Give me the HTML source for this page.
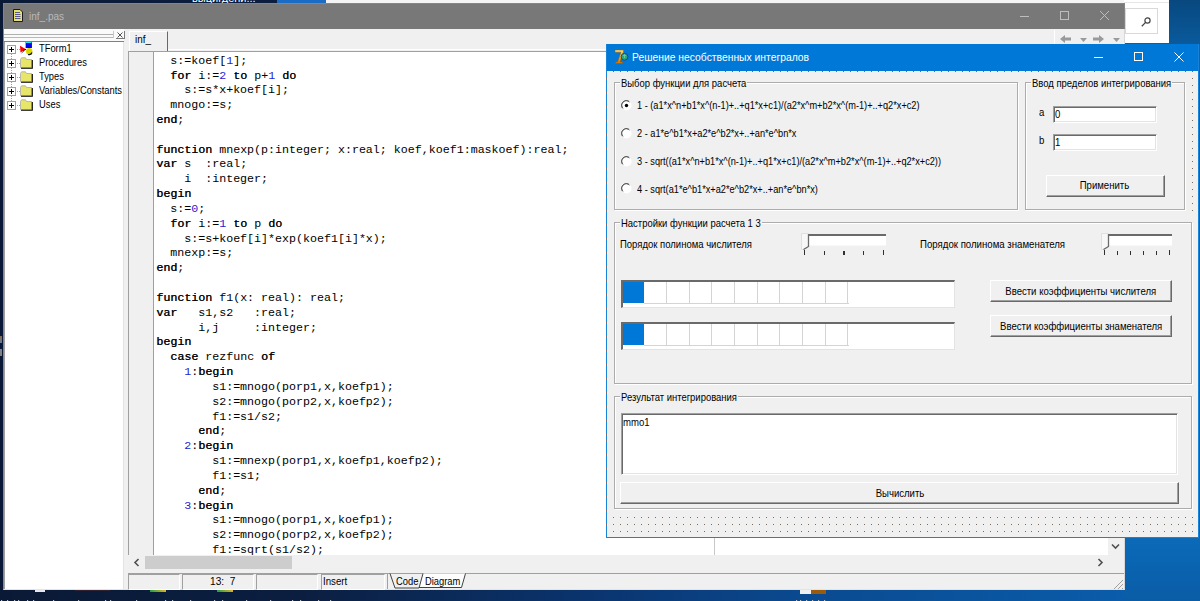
<!DOCTYPE html>
<html><head><meta charset="utf-8"><style>
*{box-sizing:border-box;margin:0;padding:0}
html,body{width:1200px;height:601px;overflow:hidden}
body{position:relative;background:linear-gradient(to right,#0a1a36 0%,#0b1e40 25%,#0b2650 33%,#0a3570 50%,#0a4a90 67%,#0a55a0 83%,#0b60b0 100%);font-family:"Liberation Sans",sans-serif;}
.a{position:absolute}
.t{position:absolute;white-space:nowrap;font-size:11px;line-height:13px;color:#000;transform-origin:0 0}
.code{position:absolute;left:156.3px;top:53.7px;font-family:"Liberation Mono",monospace;font-size:11.65px;line-height:14.83px;white-space:pre;color:#000}
.code b{font-weight:normal;text-shadow:0.4px 0 0 rgba(0,0,0,0.8)}
.code i{font-style:normal;color:#2424d4}
.grid{background-image:radial-gradient(circle at 0.5px 0.5px,#7d6e60 0.7px,transparent 0.8px);}
</style></head>
<body>
<div class="a" style="left:277px;top:0;width:49px;height:3px;background:#1a6cc4"></div>
<div class="a" style="left:326px;top:0;width:843px;height:3px;background:#f4f4f4"></div>
<div class="t" style="left:192px;top:-8px;color:#fff;font-size:11px">выцигдени...</div>
<div class="a" style="left:1124px;top:538px;width:76px;height:63px;background:linear-gradient(#0b6ab8,#0a5ca6)"></div>
<div class="a" style="left:1169px;top:0;width:31px;height:44px;background:linear-gradient(#08487f,#0a5a9c)"></div>
<div class="a" style="left:1124px;top:0;width:45px;height:43px;background:#fff"></div>
<div class="a" style="left:1124px;top:2px;width:45px;height:1px;background:#e6e6e6"></div>
<div class="a" style="left:1125px;top:8px;width:33px;height:26px;border:1px solid #d9d9d9;background:#fff"></div>
<svg class="a" style="left:1140px;top:16px" width="12" height="12" viewBox="0 0 12 12"><circle cx="7.5" cy="4.5" r="2.6" fill="none" stroke="#444" stroke-width="1.2"/><line x1="5.6" y1="6.4" x2="1.8" y2="10.2" stroke="#444" stroke-width="1.3"/></svg>
<svg class="a" style="left:0;top:598px" width="1200" height="3"><path d="M1 2.5h1.2M7 2.5h1.2M14 2.5h1.2M18 2.5h1.2M27 2.5h1.2M33 2.5h1.2M53 2.5h1.2M78 2.5h1.2M105 2.5h1.2M110 2.5h1.2M136 2.5h1.2M165 2.5h1.2M172 2.5h1.2M190 2.5h1.2M214 2.5h1.2M222 2.5h1.2M246 2.5h1.2M270 2.5h1.2M292 2.5h1.2M300 2.5h1.2M318 2.5h1.2M330 2.5h1.2M796 2.5h1.2M800 2.5h1.2M806 2.5h1.2M812 2.5h1.2M818 2.5h1.2M824 2.5h1.2" stroke="#b8c0cc" stroke-width="1"/></svg>
<div class="a" style="left:800px;top:590px;width:11px;height:4px;background:#f0f0f0"></div>
<div class="a" style="left:811px;top:590px;width:15px;height:4px;background:#9a5a10"></div>
<div class="a" style="left:35px;top:590px;width:10px;height:2px;background:#e8e8f0"></div>
<div class="a" style="left:150px;top:590px;width:16px;height:2px;background:linear-gradient(to right,#20a040,#e0b020)"></div>
<div class="a" style="left:217px;top:590px;width:16px;height:2px;background:linear-gradient(to right,#20a040,#e0b020)"></div>
<div class="a" style="left:75px;top:590px;width:35px;height:1px;background:#302030"></div>
<div class="a" style="left:0;top:336px;width:2px;height:7px;opacity:.6;background:linear-gradient(#e0a050,#a0c0f0)"></div>
<div class="a" style="left:0;top:349px;width:2px;height:7px;opacity:.6;background:linear-gradient(#c0d0f0,#e0c080)"></div>
<div class="a" style="left:3px;top:3px;width:1122px;height:587px;background:#f0f0f0;border:1px solid #8a8a8a;border-bottom-color:#e4e4e4;border-right-color:#d8d8d8"></div>
<div class="a" style="left:3px;top:3px;width:1122px;height:26px;background:#787878;border:1px solid #858585;border-bottom:none"></div>
<svg class="a" style="left:12px;top:8px" width="12" height="15" viewBox="0 0 12 15"><path d="M1.5 1.5h6.5l2.5 2.5v9.5h-9z" fill="#e8e070" stroke="#1a1a1a" stroke-width="1"/><path d="M3 4.5h5M3 6.5h5.5M3 8.5h5.5M3 10.5h5.5" stroke="#5a5a8a" stroke-width="1"/></svg>
<div class="t" style="left:29px;top:10px;color:#b8b8b8;font-size:11px;transform:scaleX(0.91)">inf_.pas</div>
<div class="a" style="left:1020px;top:16px;width:9px;height:1px;background:#bdbdbd"></div>
<div class="a" style="left:1060px;top:11px;width:9px;height:9px;border:1px solid #bdbdbd"></div>
<svg class="a" style="left:1099px;top:10px" width="11" height="11" viewBox="0 0 11 11"><path d="M1 1L10 10M10 1L1 10" stroke="#bdbdbd" stroke-width="1"/></svg>
<div class="a" style="left:4px;top:29px;width:120px;height:12px;background:#fafafa"></div>
<div class="a" style="left:4px;top:34px;width:110px;height:1px;background:#b0b0b0"></div>
<div class="a" style="left:4px;top:37px;width:110px;height:1px;background:#b8b8b8"></div>
<div class="a" style="left:113px;top:31px;width:1px;height:7px;background:#c8c8c8"></div>
<div class="a" style="left:116px;top:31px;width:9px;height:8px;border-right:1px solid #7a7a7a;border-bottom:1px solid #7a7a7a"></div>
<svg class="a" style="left:117px;top:32px" width="6" height="6" viewBox="0 0 6 6"><path d="M0.5 0.5L5.5 5.5M5.5 0.5L0.5 5.5" stroke="#404040" stroke-width="0.9"/></svg>
<div class="a" style="left:4px;top:40.5px;width:120px;height:1.5px;background:#808080"></div>
<div class="a" style="left:4px;top:42px;width:120px;height:547px;background:#fff;border-left:1px solid #a0a0a0"></div>
<div class="a" style="left:123px;top:42px;width:1px;height:547px;background:#e3e3e3"></div>
<div class="a" style="left:11px;top:54px;width:1px;height:48px;background-image:linear-gradient(#a0a0a0 50%,transparent 50%);background-size:1px 2px"></div>
<div class="a" style="left:7px;top:45px;width:9px;height:9px;border:1px solid #a0a0a0;background:#fff"></div>
<div class="a" style="left:9px;top:49px;width:5px;height:1px;background:#000"></div>
<div class="a" style="left:11px;top:47px;width:1px;height:5px;background:#000"></div>
<div class="a" style="left:17px;top:49px;width:3px;height:1px;background-image:linear-gradient(to right,#a0a0a0 50%,transparent 50%);background-size:2px 1px"></div>
<svg class="a" style="left:20px;top:42px" width="14" height="14" viewBox="0 0 14 14"><rect x="5.5" y="0" width="6" height="6" fill="#0000f0"/><path d="M5.5 6V0.5H11.5" fill="none" stroke="#20e8f0" stroke-width="1"/><path d="M11.5 0.5V6" stroke="#101010" stroke-width="0.8"/><path d="M0 3.8L6 7.3L0.5 10.5z" fill="#ff0000"/><path d="M3 8.8L6 7.3" stroke="#400000" stroke-width="1"/><path d="M1.5 11L4 9" stroke="#507070" stroke-width="1"/><circle cx="9.2" cy="9.2" r="3.2" fill="#d8d800"/><path d="M12 10.5A3.2 3.2 0 0 1 8 12.5" fill="none" stroke="#101010" stroke-width="1.2"/></svg>
<div class="t" style="left:39px;top:42px;transform:scaleX(0.85)">TForm1</div>
<div class="a" style="left:7px;top:59px;width:9px;height:9px;border:1px solid #a0a0a0;background:#fff"></div>
<div class="a" style="left:9px;top:63px;width:5px;height:1px;background:#000"></div>
<div class="a" style="left:11px;top:61px;width:1px;height:5px;background:#000"></div>
<div class="a" style="left:17px;top:63px;width:3px;height:1px;background-image:linear-gradient(to right,#a0a0a0 50%,transparent 50%);background-size:2px 1px"></div>
<svg class="a" style="left:20px;top:57px" width="14" height="13" viewBox="0 0 14 13"><path d="M0.5 2.5L1.5 0.8H5.5L6.5 2.5H11.5V10.5H0.5z" fill="#e8e66a" stroke="#a8a8a8" stroke-width="0.8"/><path d="M1 11.3H12.3V3" fill="none" stroke="#000" stroke-width="1.1"/></svg>
<div class="t" style="left:39px;top:56px;transform:scaleX(0.85)">Procedures</div>
<div class="a" style="left:7px;top:73px;width:9px;height:9px;border:1px solid #a0a0a0;background:#fff"></div>
<div class="a" style="left:9px;top:77px;width:5px;height:1px;background:#000"></div>
<div class="a" style="left:11px;top:75px;width:1px;height:5px;background:#000"></div>
<div class="a" style="left:17px;top:77px;width:3px;height:1px;background-image:linear-gradient(to right,#a0a0a0 50%,transparent 50%);background-size:2px 1px"></div>
<svg class="a" style="left:20px;top:71px" width="14" height="13" viewBox="0 0 14 13"><path d="M0.5 2.5L1.5 0.8H5.5L6.5 2.5H11.5V10.5H0.5z" fill="#e8e66a" stroke="#a8a8a8" stroke-width="0.8"/><path d="M1 11.3H12.3V3" fill="none" stroke="#000" stroke-width="1.1"/></svg>
<div class="t" style="left:39px;top:70px;transform:scaleX(0.85)">Types</div>
<div class="a" style="left:7px;top:87px;width:9px;height:9px;border:1px solid #a0a0a0;background:#fff"></div>
<div class="a" style="left:9px;top:91px;width:5px;height:1px;background:#000"></div>
<div class="a" style="left:11px;top:89px;width:1px;height:5px;background:#000"></div>
<div class="a" style="left:17px;top:91px;width:3px;height:1px;background-image:linear-gradient(to right,#a0a0a0 50%,transparent 50%);background-size:2px 1px"></div>
<svg class="a" style="left:20px;top:85px" width="14" height="13" viewBox="0 0 14 13"><path d="M0.5 2.5L1.5 0.8H5.5L6.5 2.5H11.5V10.5H0.5z" fill="#e8e66a" stroke="#a8a8a8" stroke-width="0.8"/><path d="M1 11.3H12.3V3" fill="none" stroke="#000" stroke-width="1.1"/></svg>
<div class="t" style="left:39px;top:84px;transform:scaleX(0.85)">Variables/Constants</div>
<div class="a" style="left:7px;top:101px;width:9px;height:9px;border:1px solid #a0a0a0;background:#fff"></div>
<div class="a" style="left:9px;top:105px;width:5px;height:1px;background:#000"></div>
<div class="a" style="left:11px;top:103px;width:1px;height:5px;background:#000"></div>
<div class="a" style="left:17px;top:105px;width:3px;height:1px;background-image:linear-gradient(to right,#a0a0a0 50%,transparent 50%);background-size:2px 1px"></div>
<svg class="a" style="left:20px;top:99px" width="14" height="13" viewBox="0 0 14 13"><path d="M0.5 2.5L1.5 0.8H5.5L6.5 2.5H11.5V10.5H0.5z" fill="#e8e66a" stroke="#a8a8a8" stroke-width="0.8"/><path d="M1 11.3H12.3V3" fill="none" stroke="#000" stroke-width="1.1"/></svg>
<div class="t" style="left:39px;top:98px;transform:scaleX(0.85)">Uses</div>
<div class="a" style="left:128px;top:29px;width:996px;height:22px;background:#f0f0f0"></div>
<div class="a" style="left:129px;top:31px;width:39px;height:20px;background:#f0f0f0;border-left:1px solid #fff;border-top:1px solid #fff;border-right:1px solid #696969"></div>
<div class="t" style="left:135px;top:33px;transform:scaleX(0.9)">inf_</div>
<div class="a" style="left:168px;top:49px;width:956px;height:1px;background:#fff"></div>
<div class="a" style="left:1054px;top:30px;width:1px;height:14px;background:#fff"></div>
<svg class="a" style="left:1058px;top:34px" width="64" height="10" viewBox="0 0 64 10"><path d="M2 5L7 1V3.5H13V6.5H7V9z" fill="#9a9a9a"/><path d="M22 4h7l-3.5 4z" fill="#9a9a9a"/><path d="M46 5L41 1V3.5H35V6.5H41V9z" fill="#9a9a9a"/><path d="M55 4h7l-3.5 4z" fill="#9a9a9a"/></svg>
<div class="a" style="left:128px;top:51px;width:996px;height:504px;background:#fff;border-top:1px solid #a0a0a0;border-left:1px solid #a0a0a0"></div>
<div class="a" style="left:129px;top:52px;width:24px;height:503px;background:#f0f0f0"></div>
<div class="a" style="left:153px;top:52px;width:1px;height:503px;background:#a0a0a0"></div>
<div class="a" style="left:714px;top:52px;width:1px;height:503px;background:#c8c8c8"></div>
<div class="code">  s:=koef[<i>1</i>];
  <b>for</b> i:=<i>2</i> <b>to</b> p+<i>1</i> <b>do</b>
    s:=s*x+koef[i];
  mnogo:=s;
<b>end</b>;

<b>function</b> mnexp(p:integer; x:real; koef,koef1:maskoef):real;
<b>var</b> s  :real;
    i  :integer;
<b>begin</b>
  s:=<i>0</i>;
  <b>for</b> i:=<i>1</i> <b>to</b> p <b>do</b>
    s:=s+koef[i]*exp(koef1[i]*x);
  mnexp:=s;
<b>end</b>;

<b>function</b> f1(x: real): real;
<b>var</b>   s1,s2   :real;
      i,j     :integer;
<b>begin</b>
  <b>case</b> rezfunc <b>of</b>
    <i>1</i>:<b>begin</b>
        s1:=mnogo(porp1,x,koefp1);
        s2:=mnogo(porp2,x,koefp2);
        f1:=s1/s2;
      <b>end</b>;
    <i>2</i>:<b>begin</b>
        s1:=mnexp(porp1,x,koefp1,koefp2);
        f1:=s1;
      <b>end</b>;
    <i>3</i>:<b>begin</b>
        s1:=mnogo(porp1,x,koefp1);
        s2:=mnogo(porp2,x,koefp2);
        f1:=sqrt(s1/s2);</div>
<div class="a" style="left:1108px;top:52px;width:16px;height:503px;background:#f0f0f0"></div>
<svg class="a" style="left:1111px;top:543px" width="9" height="7" viewBox="0 0 9 7"><path d="M1 1.5L4.5 5L8 1.5" fill="none" stroke="#505050" stroke-width="1.6"/></svg>
<div class="a" style="left:129px;top:555px;width:995px;height:18px;background:#f0f0f0"></div>
<div class="a" style="left:145px;top:556px;width:147px;height:13px;background:#cdcdcd"></div>
<svg class="a" style="left:133px;top:558px" width="7" height="9" viewBox="0 0 7 9"><path d="M5.5 1L2 4.5L5.5 8" fill="none" stroke="#505050" stroke-width="1.6"/></svg>
<svg class="a" style="left:1097px;top:558px" width="7" height="9" viewBox="0 0 7 9"><path d="M1.5 1L5 4.5L1.5 8" fill="none" stroke="#505050" stroke-width="1.6"/></svg>
<div class="a" style="left:128px;top:573px;width:996px;height:1px;background:#a0a0a0"></div>
<div class="a" style="left:128px;top:574px;width:996px;height:15px;background:#f0f0f0"></div>
<div class="a" style="left:128px;top:574px;width:52px;height:16px;border-top:1px solid #a0a0a0;border-left:1px solid #a0a0a0;border-right:1px solid #fff;border-bottom:1px solid #fff"></div>
<div class="a" style="left:182px;top:574px;width:72px;height:16px;border-top:1px solid #a0a0a0;border-left:1px solid #a0a0a0;border-right:1px solid #fff;border-bottom:1px solid #fff"></div>
<div class="a" style="left:256px;top:574px;width:62px;height:16px;border-top:1px solid #a0a0a0;border-left:1px solid #a0a0a0;border-right:1px solid #fff;border-bottom:1px solid #fff"></div>
<div class="a" style="left:321px;top:574px;width:64px;height:16px;border-top:1px solid #a0a0a0;border-left:1px solid #a0a0a0;border-right:1px solid #fff;border-bottom:1px solid #fff"></div>
<div class="t" style="left:210px;top:575px;transform:scaleX(0.92)">13:&nbsp;&nbsp;7</div>
<div class="t" style="left:323px;top:575px;transform:scaleX(0.88)">Insert</div>
<svg class="a" style="left:386px;top:573px" width="82" height="17" viewBox="0 0 82 17"><path d="M33 14.5L37 0.5H79.5L75.5 14.5z" fill="#fdfdfd"/><path d="M1.5 0V16" stroke="#a0a0a0" stroke-width="1"/><path d="M4 0.5L9 15H33L37 0.5" fill="none" stroke="#404040" stroke-width="1"/><path d="M33 14.5H75.5L79.5 0.5" fill="none" stroke="#404040" stroke-width="1"/></svg>
<div class="t" style="left:396px;top:575px;transform:scaleX(0.85)">Code</div>
<div class="t" style="left:425px;top:575px;transform:scaleX(0.85)">Diagram</div>
<svg class="a" style="left:1112px;top:578px" width="12" height="12" viewBox="0 0 12 12"><path d="M11 2L2 11M11 6L6 11M11 10L10 11" stroke="#a0a0a0" stroke-width="1"/></svg>
<div class="a" style="left:606px;top:44px;width:593px;height:494px;background:#1883d7"></div>
<div class="a" style="left:607px;top:44px;width:591px;height:27px;background:#0078d7"></div>
<div class="a" style="left:607px;top:71px;width:591px;height:466px;background-color:#f0f0f0"></div>
<svg class="a" style="left:606px;top:44px" width="593" height="494"><path d="M0 27h1v1h-1zM0 34h1v1h-1zM0 41h1v1h-1zM0 48h1v1h-1zM0 55h1v1h-1zM0 62h1v1h-1zM0 69h1v1h-1zM0 76h1v1h-1zM0 83h1v1h-1zM0 90h1v1h-1zM0 97h1v1h-1zM0 104h1v1h-1zM0 111h1v1h-1zM0 117h1v1h-1zM0 124h1v1h-1zM0 131h1v1h-1zM0 138h1v1h-1zM0 145h1v1h-1zM0 152h1v1h-1zM0 159h1v1h-1zM0 166h1v1h-1zM0 173h1v1h-1zM0 180h1v1h-1zM0 187h1v1h-1zM0 194h1v1h-1zM0 201h1v1h-1zM0 208h1v1h-1zM0 215h1v1h-1zM0 222h1v1h-1zM0 229h1v1h-1zM0 236h1v1h-1zM0 243h1v1h-1zM0 250h1v1h-1zM0 257h1v1h-1zM0 264h1v1h-1zM0 271h1v1h-1zM0 278h1v1h-1zM0 285h1v1h-1zM0 292h1v1h-1zM0 299h1v1h-1zM0 306h1v1h-1zM0 313h1v1h-1zM0 320h1v1h-1zM0 327h1v1h-1zM0 334h1v1h-1zM0 341h1v1h-1zM0 348h1v1h-1zM0 355h1v1h-1zM0 362h1v1h-1zM0 369h1v1h-1zM0 376h1v1h-1zM0 383h1v1h-1zM0 390h1v1h-1zM0 396h1v1h-1zM0 403h1v1h-1zM0 410h1v1h-1zM0 417h1v1h-1zM0 424h1v1h-1zM0 431h1v1h-1zM0 438h1v1h-1zM0 445h1v1h-1zM0 452h1v1h-1zM0 459h1v1h-1zM0 466h1v1h-1zM0 473h1v1h-1zM0 480h1v1h-1zM0 487h1v1h-1zM7 27h1v1h-1zM7 473h1v1h-1zM7 480h1v1h-1zM7 487h1v1h-1zM14 27h1v1h-1zM14 473h1v1h-1zM14 480h1v1h-1zM14 487h1v1h-1zM21 27h1v1h-1zM21 473h1v1h-1zM21 480h1v1h-1zM21 487h1v1h-1zM28 27h1v1h-1zM28 473h1v1h-1zM28 480h1v1h-1zM28 487h1v1h-1zM35 27h1v1h-1zM35 473h1v1h-1zM35 480h1v1h-1zM35 487h1v1h-1zM42 27h1v1h-1zM42 473h1v1h-1zM42 480h1v1h-1zM42 487h1v1h-1zM49 27h1v1h-1zM49 473h1v1h-1zM49 480h1v1h-1zM49 487h1v1h-1zM56 27h1v1h-1zM56 473h1v1h-1zM56 480h1v1h-1zM56 487h1v1h-1zM63 27h1v1h-1zM63 473h1v1h-1zM63 480h1v1h-1zM63 487h1v1h-1zM70 27h1v1h-1zM70 473h1v1h-1zM70 480h1v1h-1zM70 487h1v1h-1zM77 27h1v1h-1zM77 473h1v1h-1zM77 480h1v1h-1zM77 487h1v1h-1zM84 27h1v1h-1zM84 473h1v1h-1zM84 480h1v1h-1zM84 487h1v1h-1zM91 27h1v1h-1zM91 473h1v1h-1zM91 480h1v1h-1zM91 487h1v1h-1zM98 27h1v1h-1zM98 473h1v1h-1zM98 480h1v1h-1zM98 487h1v1h-1zM105 27h1v1h-1zM105 473h1v1h-1zM105 480h1v1h-1zM105 487h1v1h-1zM112 27h1v1h-1zM112 473h1v1h-1zM112 480h1v1h-1zM112 487h1v1h-1zM119 27h1v1h-1zM119 473h1v1h-1zM119 480h1v1h-1zM119 487h1v1h-1zM126 27h1v1h-1zM126 473h1v1h-1zM126 480h1v1h-1zM126 487h1v1h-1zM133 27h1v1h-1zM133 473h1v1h-1zM133 480h1v1h-1zM133 487h1v1h-1zM140 27h1v1h-1zM140 473h1v1h-1zM140 480h1v1h-1zM140 487h1v1h-1zM146 27h1v1h-1zM146 473h1v1h-1zM146 480h1v1h-1zM146 487h1v1h-1zM153 27h1v1h-1zM153 473h1v1h-1zM153 480h1v1h-1zM153 487h1v1h-1zM160 27h1v1h-1zM160 473h1v1h-1zM160 480h1v1h-1zM160 487h1v1h-1zM167 27h1v1h-1zM167 473h1v1h-1zM167 480h1v1h-1zM167 487h1v1h-1zM174 27h1v1h-1zM174 473h1v1h-1zM174 480h1v1h-1zM174 487h1v1h-1zM181 27h1v1h-1zM181 473h1v1h-1zM181 480h1v1h-1zM181 487h1v1h-1zM188 27h1v1h-1zM188 473h1v1h-1zM188 480h1v1h-1zM188 487h1v1h-1zM195 27h1v1h-1zM195 473h1v1h-1zM195 480h1v1h-1zM195 487h1v1h-1zM202 27h1v1h-1zM202 473h1v1h-1zM202 480h1v1h-1zM202 487h1v1h-1zM209 27h1v1h-1zM209 473h1v1h-1zM209 480h1v1h-1zM209 487h1v1h-1zM216 27h1v1h-1zM216 473h1v1h-1zM216 480h1v1h-1zM216 487h1v1h-1zM223 27h1v1h-1zM223 473h1v1h-1zM223 480h1v1h-1zM223 487h1v1h-1zM230 27h1v1h-1zM230 473h1v1h-1zM230 480h1v1h-1zM230 487h1v1h-1zM237 27h1v1h-1zM237 473h1v1h-1zM237 480h1v1h-1zM237 487h1v1h-1zM244 27h1v1h-1zM244 473h1v1h-1zM244 480h1v1h-1zM244 487h1v1h-1zM251 27h1v1h-1zM251 473h1v1h-1zM251 480h1v1h-1zM251 487h1v1h-1zM258 27h1v1h-1zM258 473h1v1h-1zM258 480h1v1h-1zM258 487h1v1h-1zM265 27h1v1h-1zM265 473h1v1h-1zM265 480h1v1h-1zM265 487h1v1h-1zM272 27h1v1h-1zM272 473h1v1h-1zM272 480h1v1h-1zM272 487h1v1h-1zM279 27h1v1h-1zM279 473h1v1h-1zM279 480h1v1h-1zM279 487h1v1h-1zM286 27h1v1h-1zM286 473h1v1h-1zM286 480h1v1h-1zM286 487h1v1h-1zM293 27h1v1h-1zM293 473h1v1h-1zM293 480h1v1h-1zM293 487h1v1h-1zM300 27h1v1h-1zM300 473h1v1h-1zM300 480h1v1h-1zM300 487h1v1h-1zM307 27h1v1h-1zM307 473h1v1h-1zM307 480h1v1h-1zM307 487h1v1h-1zM314 27h1v1h-1zM314 473h1v1h-1zM314 480h1v1h-1zM314 487h1v1h-1zM321 27h1v1h-1zM321 473h1v1h-1zM321 480h1v1h-1zM321 487h1v1h-1zM328 27h1v1h-1zM328 473h1v1h-1zM328 480h1v1h-1zM328 487h1v1h-1zM335 27h1v1h-1zM335 473h1v1h-1zM335 480h1v1h-1zM335 487h1v1h-1zM342 27h1v1h-1zM342 473h1v1h-1zM342 480h1v1h-1zM342 487h1v1h-1zM349 27h1v1h-1zM349 473h1v1h-1zM349 480h1v1h-1zM349 487h1v1h-1zM356 27h1v1h-1zM356 473h1v1h-1zM356 480h1v1h-1zM356 487h1v1h-1zM363 27h1v1h-1zM363 473h1v1h-1zM363 480h1v1h-1zM363 487h1v1h-1zM370 27h1v1h-1zM370 473h1v1h-1zM370 480h1v1h-1zM370 487h1v1h-1zM377 27h1v1h-1zM377 473h1v1h-1zM377 480h1v1h-1zM377 487h1v1h-1zM384 27h1v1h-1zM384 473h1v1h-1zM384 480h1v1h-1zM384 487h1v1h-1zM391 27h1v1h-1zM391 473h1v1h-1zM391 480h1v1h-1zM391 487h1v1h-1zM398 27h1v1h-1zM398 473h1v1h-1zM398 480h1v1h-1zM398 487h1v1h-1zM405 27h1v1h-1zM405 473h1v1h-1zM405 480h1v1h-1zM405 487h1v1h-1zM412 27h1v1h-1zM412 473h1v1h-1zM412 480h1v1h-1zM412 487h1v1h-1zM419 27h1v1h-1zM419 473h1v1h-1zM419 480h1v1h-1zM419 487h1v1h-1zM425 27h1v1h-1zM425 473h1v1h-1zM425 480h1v1h-1zM425 487h1v1h-1zM432 27h1v1h-1zM432 473h1v1h-1zM432 480h1v1h-1zM432 487h1v1h-1zM439 27h1v1h-1zM439 473h1v1h-1zM439 480h1v1h-1zM439 487h1v1h-1zM446 27h1v1h-1zM446 473h1v1h-1zM446 480h1v1h-1zM446 487h1v1h-1zM453 27h1v1h-1zM453 473h1v1h-1zM453 480h1v1h-1zM453 487h1v1h-1zM460 27h1v1h-1zM460 473h1v1h-1zM460 480h1v1h-1zM460 487h1v1h-1zM467 27h1v1h-1zM467 473h1v1h-1zM467 480h1v1h-1zM467 487h1v1h-1zM474 27h1v1h-1zM474 473h1v1h-1zM474 480h1v1h-1zM474 487h1v1h-1zM481 27h1v1h-1zM481 473h1v1h-1zM481 480h1v1h-1zM481 487h1v1h-1zM488 27h1v1h-1zM488 473h1v1h-1zM488 480h1v1h-1zM488 487h1v1h-1zM495 27h1v1h-1zM495 473h1v1h-1zM495 480h1v1h-1zM495 487h1v1h-1zM502 27h1v1h-1zM502 473h1v1h-1zM502 480h1v1h-1zM502 487h1v1h-1zM509 27h1v1h-1zM509 473h1v1h-1zM509 480h1v1h-1zM509 487h1v1h-1zM516 27h1v1h-1zM516 473h1v1h-1zM516 480h1v1h-1zM516 487h1v1h-1zM523 27h1v1h-1zM523 473h1v1h-1zM523 480h1v1h-1zM523 487h1v1h-1zM530 27h1v1h-1zM530 473h1v1h-1zM530 480h1v1h-1zM530 487h1v1h-1zM537 27h1v1h-1zM537 473h1v1h-1zM537 480h1v1h-1zM537 487h1v1h-1zM544 27h1v1h-1zM544 473h1v1h-1zM544 480h1v1h-1zM544 487h1v1h-1zM551 27h1v1h-1zM551 473h1v1h-1zM551 480h1v1h-1zM551 487h1v1h-1zM558 27h1v1h-1zM558 473h1v1h-1zM558 480h1v1h-1zM558 487h1v1h-1zM565 27h1v1h-1zM565 473h1v1h-1zM565 480h1v1h-1zM565 487h1v1h-1zM572 27h1v1h-1zM572 473h1v1h-1zM572 480h1v1h-1zM572 487h1v1h-1zM579 27h1v1h-1zM579 473h1v1h-1zM579 480h1v1h-1zM579 487h1v1h-1zM586 27h1v1h-1zM586 34h1v1h-1zM586 41h1v1h-1zM586 48h1v1h-1zM586 55h1v1h-1zM586 62h1v1h-1zM586 69h1v1h-1zM586 76h1v1h-1zM586 83h1v1h-1zM586 90h1v1h-1zM586 97h1v1h-1zM586 104h1v1h-1zM586 111h1v1h-1zM586 117h1v1h-1zM586 124h1v1h-1zM586 131h1v1h-1zM586 138h1v1h-1zM586 145h1v1h-1zM586 152h1v1h-1zM586 159h1v1h-1zM586 166h1v1h-1zM586 473h1v1h-1zM586 480h1v1h-1zM586 487h1v1h-1z" fill="#7a6a5c" shape-rendering="crispEdges"/></svg>
<svg class="a" style="left:614px;top:49px" width="16" height="16" viewBox="0 0 16 16"><defs><linearGradient id="g7" x1="0" y1="0" x2="0" y2="1"><stop offset="0" stop-color="#ffe070"/><stop offset="0.5" stop-color="#f0b020"/><stop offset="1" stop-color="#d07010"/></linearGradient></defs><path d="M1 1H9.5V3L6 13H8.5V14.6H1.5V13H3.5L7 3.2H1z" fill="url(#g7)" stroke="#a05800" stroke-width="0.5"/><circle cx="10.5" cy="7.8" r="3.4" fill="#28a878" stroke="#283890" stroke-width="0.9"/><path d="M9 6.5h3M10.5 5v4" stroke="#70d0a0" stroke-width="0.8"/></svg>
<div class="t" style="left:632px;top:51px;color:#fff;font-size:11px;transform:scaleX(0.94)">Решение несобственных интегралов</div>
<div class="a" style="left:1094px;top:57px;width:9px;height:1px;background:#fff"></div>
<div class="a" style="left:1134px;top:52px;width:9px;height:9px;border:1px solid #fff"></div>
<svg class="a" style="left:1173px;top:51px" width="12" height="12" viewBox="0 0 12 12"><path d="M1.5 1.5L10.5 10.5M10.5 1.5L1.5 10.5" stroke="#fff" stroke-width="1"/></svg>
<div class="a" style="left:614px;top:82px;width:404px;height:128px;background:#f0f0f0;border:1px solid #acacac;box-shadow:inset 1px 1px 0 #fff, 1px 1px 0 #fff"></div>
<div class="a" style="left:620px;top:76px;width:127.4px;height:10px;background:#f0f0f0"></div>
<div class="t" style="left:621px;top:77px;transform:scaleX(0.86)">Выбор функции для расчета</div>
<svg class="a" style="left:621px;top:100.0px" width="12" height="12" viewBox="0 0 12 12"><circle cx="5.5" cy="5.5" r="5" fill="#fff"/><path d="M1.2 8A5 5 0 0 1 8 1.2" fill="none" stroke="#808080" stroke-width="1"/><path d="M2 8.5A4.5 4.5 0 0 1 8.5 2" fill="none" stroke="#404040" stroke-width="0.8"/><circle cx="5.5" cy="5.5" r="1.7" fill="#000"/></svg>
<div class="t" style="left:636.5px;top:99px;transform:scaleX(0.836)">1 - (a1*x^n+b1*x^(n-1)+..+q1*x+c1)/(a2*x^m+b2*x^(m-1)+..+q2*x+c2)</div>
<svg class="a" style="left:621px;top:127.80000000000001px" width="12" height="12" viewBox="0 0 12 12"><circle cx="5.5" cy="5.5" r="5" fill="#fff"/><path d="M1.2 8A5 5 0 0 1 8 1.2" fill="none" stroke="#808080" stroke-width="1"/><path d="M2 8.5A4.5 4.5 0 0 1 8.5 2" fill="none" stroke="#404040" stroke-width="0.8"/></svg>
<div class="t" style="left:636.5px;top:127px;transform:scaleX(0.836)">2 - a1*e^b1*x+a2*e^b2*x+..+an*e^bn*x</div>
<svg class="a" style="left:621px;top:155.6px" width="12" height="12" viewBox="0 0 12 12"><circle cx="5.5" cy="5.5" r="5" fill="#fff"/><path d="M1.2 8A5 5 0 0 1 8 1.2" fill="none" stroke="#808080" stroke-width="1"/><path d="M2 8.5A4.5 4.5 0 0 1 8.5 2" fill="none" stroke="#404040" stroke-width="0.8"/></svg>
<div class="t" style="left:636.5px;top:155px;transform:scaleX(0.836)">3 - sqrt((a1*x^n+b1*x^(n-1)+..+q1*x+c1)/(a2*x^m+b2*x^(m-1)+..+q2*x+c2))</div>
<svg class="a" style="left:621px;top:183.4px" width="12" height="12" viewBox="0 0 12 12"><circle cx="5.5" cy="5.5" r="5" fill="#fff"/><path d="M1.2 8A5 5 0 0 1 8 1.2" fill="none" stroke="#808080" stroke-width="1"/><path d="M2 8.5A4.5 4.5 0 0 1 8.5 2" fill="none" stroke="#404040" stroke-width="0.8"/></svg>
<div class="t" style="left:636.5px;top:183px;transform:scaleX(0.836)">4 - sqrt(a1*e^b1*x+a2*e^b2*x+..+an*e^bn*x)</div>
<div class="a" style="left:1025px;top:82px;width:160px;height:128px;background:#f0f0f0;border:1px solid #acacac;box-shadow:inset 1px 1px 0 #fff, 1px 1px 0 #fff"></div>
<div class="a" style="left:1031px;top:76px;width:141.3px;height:10px;background:#f0f0f0"></div>
<div class="t" style="left:1032px;top:77px;transform:scaleX(0.86)">Ввод пределов интегрирования</div>
<div class="t" style="left:1039px;top:106px;transform:scaleX(0.87)">a</div>
<div class="t" style="left:1039px;top:134px;transform:scaleX(0.87)">b</div>
<div class="a" style="left:1053px;top:106px;width:104px;height:17px;background:#fff;border-top:1px solid #a0a0a0;border-left:1px solid #a0a0a0;border-right:1px solid #fff;border-bottom:1px solid #fff;box-shadow:inset 1px 1px 0 #696969, inset -1px -1px 0 #e3e3e3"></div>
<div class="a" style="left:1053px;top:134px;width:104px;height:17px;background:#fff;border-top:1px solid #a0a0a0;border-left:1px solid #a0a0a0;border-right:1px solid #fff;border-bottom:1px solid #fff;box-shadow:inset 1px 1px 0 #696969, inset -1px -1px 0 #e3e3e3"></div>
<div class="t" style="left:1055px;top:108px;transform:scaleX(0.87)">0</div>
<div class="t" style="left:1055px;top:136px;transform:scaleX(0.87)">1</div>
<div class="a" style="left:1046px;top:175px;width:119px;height:22px;background:#f0f0f0;border-top:1px solid #fff;border-left:1px solid #fff;border-right:1px solid #696969;border-bottom:1px solid #696969;box-shadow:inset -1px -1px 0 #a0a0a0"></div>
<div class="a" style="left:1045px;top:174px;width:119px;height:22px;display:flex;align-items:center;justify-content:center"><span style="white-space:nowrap;font-size:11px;transform:scaleX(0.87);display:inline-block">Применить</span></div>
<div class="a" style="left:614px;top:222px;width:578px;height:162px;background:#f0f0f0;border:1px solid #acacac;box-shadow:inset 1px 1px 0 #fff, 1px 1px 0 #fff"></div>
<div class="a" style="left:620px;top:216px;width:141.7px;height:10px;background:#f0f0f0"></div>
<div class="t" style="left:621px;top:217px;transform:scaleX(0.86)">Настройки функции расчета 1 3</div>
<div class="t" style="left:620px;top:238px;transform:scaleX(0.864)">Порядок полинома числителя</div>
<div class="t" style="left:920px;top:238px;transform:scaleX(0.876)">Порядок полинома знаменателя</div>
<div class="a" style="left:808px;top:234px;width:78px;height:12px;background:#fff;border-top:2px solid #6a6a6a;border-left:1px solid #6a6a6a;border-bottom:1px solid #f8f8f8"></div>
<svg class="a" style="left:801px;top:233px" width="9" height="17" viewBox="0 0 9 17"><path d="M0.5 0.5H7.5V13.5L2.5 16.5H0.5z" fill="#f7f7f7" stroke="#dadada" stroke-width="0.8"/><path d="M7.5 1V13.5L2.5 16.5" fill="none" stroke="#6a6a6a" stroke-width="1.3"/></svg>
<div class="a" style="left:803.9px;top:250px;width:1.4px;height:5px;background:#303030"></div>
<div class="a" style="left:823.7px;top:251px;width:1.4px;height:4px;background:#303030"></div>
<div class="a" style="left:843.4px;top:251px;width:1.4px;height:4px;background:#303030"></div>
<div class="a" style="left:863.1px;top:251px;width:1.4px;height:4px;background:#303030"></div>
<div class="a" style="left:882.8px;top:250px;width:1.4px;height:5px;background:#303030"></div>
<div class="a" style="left:1108px;top:234px;width:64px;height:12px;background:#fff;border-top:2px solid #6a6a6a;border-left:1px solid #6a6a6a;border-bottom:1px solid #f8f8f8"></div>
<svg class="a" style="left:1101px;top:233px" width="9" height="17" viewBox="0 0 9 17"><path d="M0.5 0.5H7.5V13.5L2.5 16.5H0.5z" fill="#f7f7f7" stroke="#dadada" stroke-width="0.8"/><path d="M7.5 1V13.5L2.5 16.5" fill="none" stroke="#6a6a6a" stroke-width="1.3"/></svg>
<div class="a" style="left:1103.5px;top:250px;width:1.4px;height:5px;background:#303030"></div>
<div class="a" style="left:1116.5px;top:251px;width:1.4px;height:4px;background:#303030"></div>
<div class="a" style="left:1129.5px;top:251px;width:1.4px;height:4px;background:#303030"></div>
<div class="a" style="left:1142.5px;top:251px;width:1.4px;height:4px;background:#303030"></div>
<div class="a" style="left:1155.5px;top:251px;width:1.4px;height:4px;background:#303030"></div>
<div class="a" style="left:1168.5px;top:250px;width:1.4px;height:5px;background:#303030"></div>
<div class="a" style="left:621px;top:280px;width:334px;height:28px;background:#fff;border-top:2px solid #6a6a6a;border-left:2px solid #6a6a6a;border-bottom:1px solid #e3e3e3;border-right:1px solid #e3e3e3"></div>
<div class="a" style="left:623px;top:282px;width:21px;height:21px;background:#0078d7"></div>
<div class="a" style="left:666.10px;top:282px;width:1px;height:22px;background:#d4d4d4"></div>
<div class="a" style="left:688.77px;top:282px;width:1px;height:22px;background:#d4d4d4"></div>
<div class="a" style="left:711.44px;top:282px;width:1px;height:22px;background:#d4d4d4"></div>
<div class="a" style="left:734.11px;top:282px;width:1px;height:22px;background:#d4d4d4"></div>
<div class="a" style="left:756.78px;top:282px;width:1px;height:22px;background:#d4d4d4"></div>
<div class="a" style="left:779.45px;top:282px;width:1px;height:22px;background:#d4d4d4"></div>
<div class="a" style="left:802.12px;top:282px;width:1px;height:22px;background:#d4d4d4"></div>
<div class="a" style="left:824.79px;top:282px;width:1px;height:22px;background:#d4d4d4"></div>
<div class="a" style="left:847.46px;top:282px;width:1px;height:22px;background:#d4d4d4"></div>
<div class="a" style="left:644px;top:303px;width:205px;height:1px;background:#d4d4d4"></div>
<div class="a" style="left:621px;top:322px;width:334px;height:28px;background:#fff;border-top:2px solid #6a6a6a;border-left:2px solid #6a6a6a;border-bottom:1px solid #e3e3e3;border-right:1px solid #e3e3e3"></div>
<div class="a" style="left:623px;top:324px;width:21px;height:21px;background:#0078d7"></div>
<div class="a" style="left:666.10px;top:324px;width:1px;height:22px;background:#d4d4d4"></div>
<div class="a" style="left:688.77px;top:324px;width:1px;height:22px;background:#d4d4d4"></div>
<div class="a" style="left:711.44px;top:324px;width:1px;height:22px;background:#d4d4d4"></div>
<div class="a" style="left:734.11px;top:324px;width:1px;height:22px;background:#d4d4d4"></div>
<div class="a" style="left:756.78px;top:324px;width:1px;height:22px;background:#d4d4d4"></div>
<div class="a" style="left:779.45px;top:324px;width:1px;height:22px;background:#d4d4d4"></div>
<div class="a" style="left:802.12px;top:324px;width:1px;height:22px;background:#d4d4d4"></div>
<div class="a" style="left:824.79px;top:324px;width:1px;height:22px;background:#d4d4d4"></div>
<div class="a" style="left:847.46px;top:324px;width:1px;height:22px;background:#d4d4d4"></div>
<div class="a" style="left:644px;top:345px;width:205px;height:1px;background:#d4d4d4"></div>
<div class="a" style="left:990px;top:280px;width:182px;height:22px;background:#f0f0f0;border-top:1px solid #fff;border-left:1px solid #fff;border-right:1px solid #696969;border-bottom:1px solid #696969;box-shadow:inset -1px -1px 0 #a0a0a0"></div>
<div class="a" style="left:990px;top:280px;width:182px;height:22px;display:flex;align-items:center;justify-content:center"><span style="white-space:nowrap;font-size:11px;transform:scaleX(0.87);display:inline-block">Ввести коэффициенты числителя</span></div>
<div class="a" style="left:990px;top:315px;width:182px;height:22px;background:#f0f0f0;border-top:1px solid #fff;border-left:1px solid #fff;border-right:1px solid #696969;border-bottom:1px solid #696969;box-shadow:inset -1px -1px 0 #a0a0a0"></div>
<div class="a" style="left:990px;top:315px;width:182px;height:22px;display:flex;align-items:center;justify-content:center"><span style="white-space:nowrap;font-size:11px;transform:scaleX(0.87);display:inline-block">Ввести коэффициенты знаменателя</span></div>
<div class="a" style="left:614px;top:396px;width:578px;height:113px;background:#f0f0f0;border:1px solid #acacac;box-shadow:inset 1px 1px 0 #fff, 1px 1px 0 #fff"></div>
<div class="a" style="left:620px;top:390px;width:118.0px;height:10px;background:#f0f0f0"></div>
<div class="t" style="left:621px;top:391px;transform:scaleX(0.86)">Результат интегрирования</div>
<div class="a" style="left:621px;top:413px;width:557px;height:62px;background:#fff;border-top:1px solid #a0a0a0;border-left:1px solid #a0a0a0;border-right:1px solid #fff;border-bottom:1px solid #fff;box-shadow:inset 1px 1px 0 #696969, inset -1px -1px 0 #e3e3e3"></div>
<div class="t" style="left:623px;top:416px;transform:scaleX(0.87)">mmo1</div>
<div class="a" style="left:620px;top:482px;width:559px;height:22px;background:#f0f0f0;border-top:1px solid #fff;border-left:1px solid #fff;border-right:1px solid #696969;border-bottom:1px solid #696969;box-shadow:inset -1px -1px 0 #a0a0a0"></div>
<div class="a" style="left:620px;top:482px;width:559px;height:22px;display:flex;align-items:center;justify-content:center"><span style="white-space:nowrap;font-size:11px;transform:scaleX(0.87);display:inline-block">Вычислить</span></div>
</body></html>
